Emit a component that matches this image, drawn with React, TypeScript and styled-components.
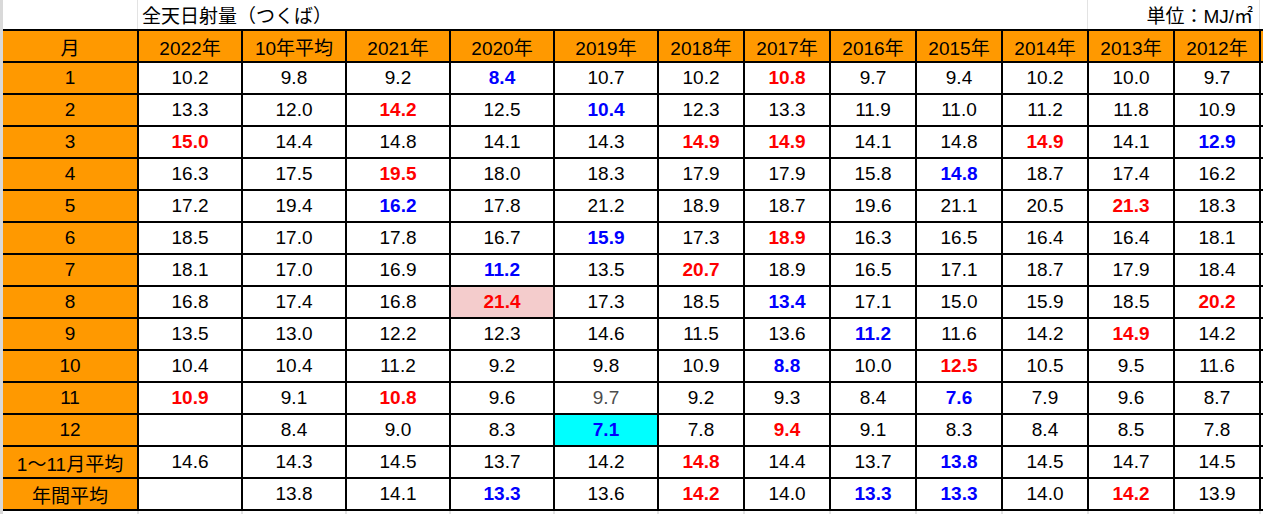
import React from "react";
import styled, {createGlobalStyle} from "styled-components";

const GlobalStyle = createGlobalStyle`
  html, body {
    margin: 0;
    padding: 0;
    background: #fff;
    overflow: hidden;
  }
  body {
    font-family: "Liberation Sans", "Noto Sans CJK JP", sans-serif;
    color: #000;
  }
`;

const ORANGE = "#ff9900";
const GRID_LINE = "#d9d9d9";
// 13 visible columns plus the edge of the next one
const COLUMNS = "134px repeat(5, 102px) repeat(7, 84px) 84px";

type Tone = "red" | "blue" | "grey";
type Fill = "pink" | "cyan";

interface CellData {
  v: string;
  tone?: Tone;
  fill?: Fill;
}

const toneColor: Record<Tone, string> = {
  red: "#ff0000",
  blue: "#0000ff",
  grey: "#4d4d4d",
};

const fillColor: Record<Fill, string> = {
  pink: "#f4cccc",
  cyan: "#00ffff",
};

// "r:10.8" red, "b:8.4" blue, "g:9.7" grey, "rp:" red on pink, "bc:" blue on cyan
const parse = (raw: string): CellData => {
  const [flag, v] = raw.includes(":") ? raw.split(":") : ["", raw];
  const cell: CellData = {v};
  if (flag.includes("r")) cell.tone = "red";
  if (flag.includes("b")) cell.tone = "blue";
  if (flag.includes("g")) cell.tone = "grey";
  if (flag.includes("p")) cell.fill = "pink";
  if (flag.includes("c")) cell.fill = "cyan";
  return cell;
};

const headers = [
  "月", "2022年", "10年平均", "2021年", "2020年", "2019年", "2018年",
  "2017年", "2016年", "2015年", "2014年", "2013年", "2012年",
];

const rows: {label: string; values: string[]}[] = [
  {label: "1", values: ["10.2", "9.8", "9.2", "b:8.4", "10.7", "10.2", "r:10.8", "9.7", "9.4", "10.2", "10.0", "9.7"]},
  {label: "2", values: ["13.3", "12.0", "r:14.2", "12.5", "b:10.4", "12.3", "13.3", "11.9", "11.0", "11.2", "11.8", "10.9"]},
  {label: "3", values: ["r:15.0", "14.4", "14.8", "14.1", "14.3", "r:14.9", "r:14.9", "14.1", "14.8", "r:14.9", "14.1", "b:12.9"]},
  {label: "4", values: ["16.3", "17.5", "r:19.5", "18.0", "18.3", "17.9", "17.9", "15.8", "b:14.8", "18.7", "17.4", "16.2"]},
  {label: "5", values: ["17.2", "19.4", "b:16.2", "17.8", "21.2", "18.9", "18.7", "19.6", "21.1", "20.5", "r:21.3", "18.3"]},
  {label: "6", values: ["18.5", "17.0", "17.8", "16.7", "b:15.9", "17.3", "r:18.9", "16.3", "16.5", "16.4", "16.4", "18.1"]},
  {label: "7", values: ["18.1", "17.0", "16.9", "b:11.2", "13.5", "r:20.7", "18.9", "16.5", "17.1", "18.7", "17.9", "18.4"]},
  {label: "8", values: ["16.8", "17.4", "16.8", "rp:21.4", "17.3", "18.5", "b:13.4", "17.1", "15.0", "15.9", "18.5", "r:20.2"]},
  {label: "9", values: ["13.5", "13.0", "12.2", "12.3", "14.6", "11.5", "13.6", "b:11.2", "11.6", "14.2", "r:14.9", "14.2"]},
  {label: "10", values: ["10.4", "10.4", "11.2", "9.2", "9.8", "10.9", "b:8.8", "10.0", "r:12.5", "10.5", "9.5", "11.6"]},
  {label: "11", values: ["r:10.9", "9.1", "r:10.8", "9.6", "g:9.7", "9.2", "9.3", "8.4", "b:7.6", "7.9", "9.6", "8.7"]},
  {label: "12", values: ["", "8.4", "9.0", "8.3", "bc:7.1", "7.8", "r:9.4", "9.1", "8.3", "8.4", "8.5", "7.8"]},
  {label: "1～11月平均", values: ["14.6", "14.3", "14.5", "13.7", "14.2", "r:14.8", "14.4", "13.7", "b:13.8", "14.5", "14.7", "14.5"]},
  {label: "年間平均", values: ["", "13.8", "14.1", "b:13.3", "13.6", "r:14.2", "14.0", "b:13.3", "b:13.3", "14.0", "r:14.2", "13.9"]},
];

const Sheet = styled.div`
  width: 1260px;
  height: 514px;
  border-left: 3px solid ${GRID_LINE};
  overflow: hidden;
`;

const TitleRow = styled.div`
  display: grid;
  grid-template-columns: 135px 950px 172px;
  height: 29px;
  font-size: 19px;
`;

const TitleCell = styled.div<{$align?: "left" | "right"}>`
  display: flex;
  align-items: center;
  justify-content: ${(p) => (p.$align === "right" ? "flex-end" : "flex-start")};
  padding: 0 ${(p) => (p.$align === "right" ? "6px" : "4px")};
  border-right: 1px solid #e3e3e3;
  white-space: nowrap;
  overflow: hidden;
`;

const Grid = styled.div`
  display: grid;
  grid-template-columns: ${COLUMNS};
  grid-auto-rows: 30px;
  gap: 2px;
  padding: 2px 0;
  width: max-content;
  background: #000;
`;

const HeadCell = styled.div`
  display: flex;
  align-items: center;
  justify-content: center;
  background: ${ORANGE};
  font-size: 19px;
  white-space: nowrap;
`;

const ValueCell = styled.div<{$tone?: Tone; $fill?: Fill}>`
  display: flex;
  align-items: center;
  justify-content: center;
  background: ${(p) => (p.$fill ? fillColor[p.$fill] : "#fff")};
  color: ${(p) => (p.$tone ? toneColor[p.$tone] : "#000")};
  font-size: 19px;
  font-weight: ${(p) => (p.$tone === "red" || p.$tone === "blue" ? 700 : 400)};
`;

const FootLines = styled.div`
  display: grid;
  grid-template-columns: ${COLUMNS};
  gap: 2px;
  height: 3px;
  width: max-content;
  background: #e3e3e3;
`;

const FootCell = styled.div`
  background: #fff;
`;

export default function App() {
  return (
    <>
      <GlobalStyle />
      <Sheet>
        <TitleRow>
          <TitleCell />
          <TitleCell>全天日射量（つくば）</TitleCell>
          <TitleCell $align="right">単位：MJ/㎡</TitleCell>
        </TitleRow>
        <Grid>
          {headers.map((h) => (
            <HeadCell key={h}>{h}</HeadCell>
          ))}
          <HeadCell />
          {rows.map((row) => (
            <React.Fragment key={row.label}>
              <HeadCell>{row.label}</HeadCell>
              {row.values.map((raw, i) => {
                const cell = parse(raw);
                return (
                  <ValueCell key={i} $tone={cell.tone} $fill={cell.fill}>
                    {cell.v}
                  </ValueCell>
                );
              })}
              <ValueCell />
            </React.Fragment>
          ))}
        </Grid>
        <FootLines>
          {Array.from({length: 14}, (_, i) => (
            <FootCell key={i} />
          ))}
        </FootLines>
      </Sheet>
    </>
  );
}
